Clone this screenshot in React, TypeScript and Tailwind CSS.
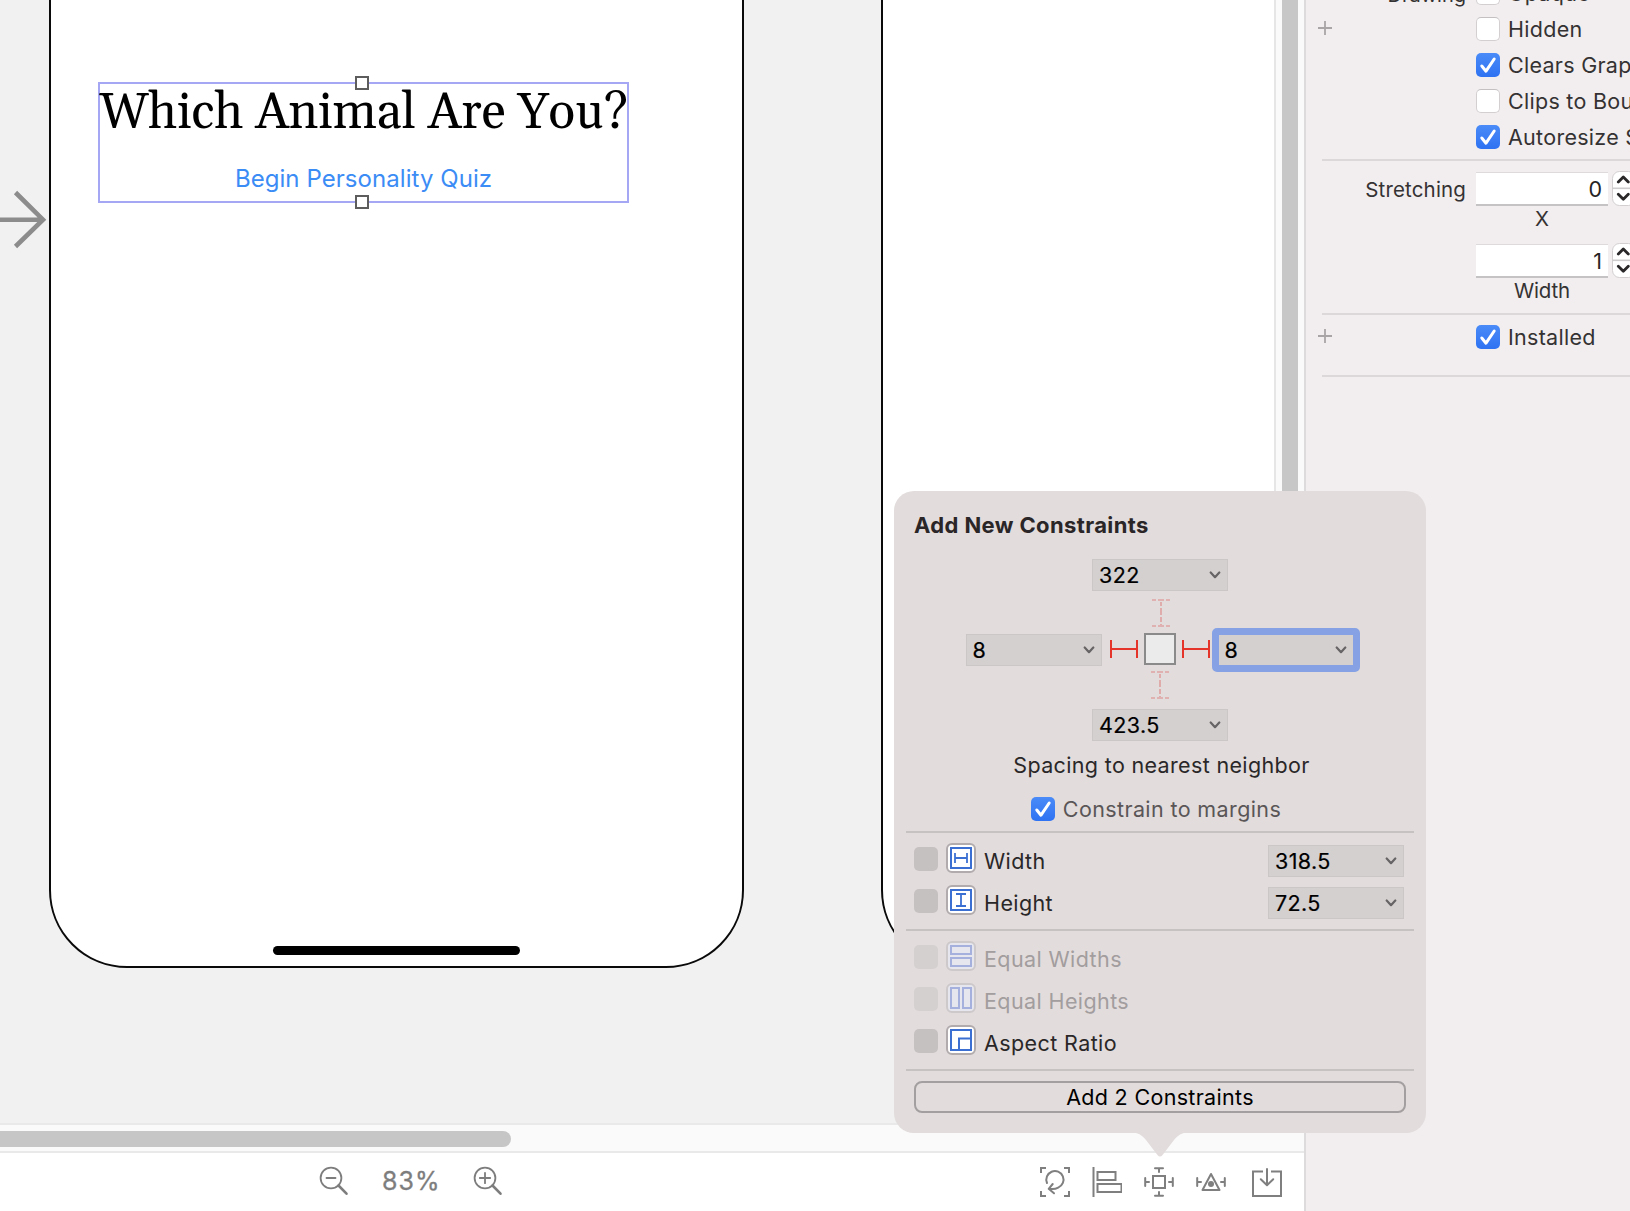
import type { ReactNode } from "react";

function Check() {
  return (
    <svg viewBox="0 0 24 24" className="size-6" fill="none">
      <path d="M5.8 13L10 18.2L18.2 6" stroke="white" strokeWidth="3" strokeLinecap="round" strokeLinejoin="round" />
    </svg>
  );
}

function CheckBox({ checked }: { checked?: boolean }) {
  return checked ? (
    <span className="size-6 shrink-0 rounded-[5px] bg-gradient-to-b from-[#4a8bf8] to-[#2f72f2]">
      <Check />
    </span>
  ) : (
    <span className="size-6 shrink-0 rounded-[5px] border border-[#d3cfd0] border-t-[#c4c0c1] bg-white" />
  );
}

function Attribute({ label, checked }: { label: string; checked?: boolean }) {
  return (
    <div className="flex h-9 items-center whitespace-nowrap pl-[170px]">
      <CheckBox checked={checked} />
      <span className="ml-2 text-[21.5px] tracking-[0.28px]">{label}</span>
    </div>
  );
}

function Plus() {
  return (
    <svg viewBox="0 0 14 14" className="size-[14px]" stroke="#a9a5a6" strokeWidth="1.8">
      <path d="M7 0V14M0 7H14" />
    </svg>
  );
}

function StepperField({ value }: { value: string }) {
  return (
    <div className="flex">
      <div className="flex h-[34px] w-[132px] shrink-0 items-center justify-end border-b-2 border-t border-b-[#c6c3c4] border-t-[#dedadb] bg-white pr-[6px] pt-px text-[21.5px] text-[#262424]">
        {value}
      </div>
      <svg viewBox="0 0 24 36" className="-mt-px ml-1 h-9 w-6 shrink-0" fill="none">
        <rect x="0.5" y="0.5" width="23" height="34" rx="7" fill="#fff" stroke="#d3cfd0" />
        <path d="M0 17.3H24" stroke="#cfcccd" strokeWidth="1.6" />
        <path d="M6.3 11L11.3 6L16.3 11M6.3 23.2L11.3 28.2L16.3 23.2" stroke="#2a2829" strokeWidth="2.8" strokeLinecap="round" strokeLinejoin="round" />
      </svg>
    </div>
  );
}

function Inspector() {
  return (
    <aside className="relative h-full w-[324px] overflow-hidden bg-[#f2eeef] text-[#353233]">
      <div className="-mt-[25px]">
        <div className="relative">
          <span className="absolute right-[164px] top-[5px] text-[20px]">Drawing</span>
          <Attribute label="Opaque" />
        </div>
        <div className="relative">
          <span className="absolute left-3 top-[10px]"><Plus /></span>
          <Attribute label="Hidden" />
        </div>
        <Attribute label="Clears Graphics Context" checked />
        <Attribute label="Clips to Bounds" />
        <Attribute label="Autoresize Subviews" checked />
      </div>
      <div className="ml-4 mt-1 h-0.5 bg-[#dcd8d9]" />
      <div className="mt-[11px] flex">
        <div className="w-[170px] shrink-0 pr-[10px] pt-[2px] text-right text-[20.5px] leading-[31px] tracking-[0.15px]">Stretching</div>
        <div className="shrink-0">
          <StepperField value="0" />
          <div className="-mt-px h-[38px] w-[132px] text-center text-[20.5px] leading-[26px]">X</div>
          <StepperField value="1" />
          <div className="-mt-px h-[38px] w-[132px] text-center text-[20.5px] leading-[26px] tracking-[-0.2px]">Width</div>
        </div>
      </div>
      <div className="ml-4 -mt-[3px] h-0.5 bg-[#dcd8d9]" />
      <div className="relative mt-1">
        <span className="absolute left-3 top-[10px]"><Plus /></span>
        <Attribute label="Installed" checked />
      </div>
      <div className="ml-4 mt-5 h-0.5 bg-[#dcd8d9]" />
    </aside>
  );
}

function Combo({ value, focused }: { value: string; focused?: boolean }) {
  return (
    <div
      className={
        "flex items-center justify-between bg-[#d5d0d0] text-[21.5px] tracking-[0.4px] text-black [-webkit-text-stroke:0.2px_black] " +
        (focused
          ? "h-11 w-[148px] rounded-[5px] border-[7px] border-[#86a2e4] pl-[6px] pr-[6px]"
          : "h-8 w-[136px] border border-[#ccc7c7] pl-[6px] pr-[6px]")
      }
    >
      <span>{value}</span>
      <svg viewBox="0 0 12 8" className="h-2 w-3" fill="none" stroke="#676465" strokeWidth="2.2" strokeLinecap="round" strokeLinejoin="round">
        <path d="M1.7 1.5L6 6.2L10.3 1.5" />
      </svg>
    </div>
  );
}

function Strut() {
  return (
    <svg viewBox="0 0 28 18" className="h-[18px] w-7" stroke="#e5352b" strokeWidth="2" fill="none">
      <path d="M1 0V18M27 0V18M1 9H27" />
    </svg>
  );
}

function DashedStrut() {
  return (
    <svg viewBox="0 0 18 28" className="h-7 w-[18px]" stroke="#dfa3a3" strokeWidth="1.7" fill="none">
      <path d="M0 1H18M0 27H18" strokeDasharray="4 2 6 2 4" />
      <path d="M9 3V26" strokeDasharray="4 2 7 2 5 2" />
    </svg>
  );
}

function Option({ label, icon, dim, value }: { label: string; icon: ReactNode; dim?: boolean; value?: string }) {
  return (
    <div className="flex h-[42px] items-center pl-5 pr-[22px]">
      <span className={"mb-1 size-6 rounded-[5px] " + (dim ? "bg-[#d5d0d0]" : "bg-[#c6c1c1]")} />
      <span
        className={
          "mb-[6px] ml-2 flex size-[30px] items-center justify-center rounded-[6px] border-2 " +
          (dim ? "border-[#cdc8ca] bg-[#e6e6ef]" : "border-[#b1abad] bg-white")
        }
      >
        <svg viewBox="0 0 22 22" className="size-[22px]" fill="none" stroke={dim ? "#a6b0dc" : "#3b70d2"} strokeWidth="2">
          {icon}
        </svg>
      </span>
      <span className={"ml-2 flex-1 text-[21.5px] tracking-[0.4px] " + (dim ? "text-[#a29d9e]" : "text-[#2a2728]")}>{label}</span>
      {value && <Combo value={value} />}
    </div>
  );
}

function Rule() {
  return <div className="mx-3 h-0.5 shrink-0 bg-[#c7c2c2]" />;
}

function Popover() {
  return (
    <section className="absolute left-[894px] top-[491px] flex h-[642px] w-[532px] flex-col rounded-[20px] bg-[#e2dcdc]">
      <h2 className="flex h-[68px] items-center pl-5 text-[22px] font-bold tracking-[0.38px] text-[#2a2527]">Add New Constraints</h2>
      <div className="flex flex-col items-center">
        <Combo value="322" />
        <div className="ml-[2px] mt-2"><DashedStrut /></div>
        <div className="ml-[5px] mt-[1px] flex h-11 items-center">
          <Combo value="8" />
          <span className="-mt-0.5 ml-2"><Strut /></span>
          <span className="-mt-0.5 mx-[6px] size-8 border-2 border-[#8b8a8b] bg-[#ebebeb]" />
          <span className="-mt-0.5"><Strut /></span>
          <span className="ml-0.5"><Combo value="8" focused /></span>
        </div>
        <div className="mt-[-1px]"><DashedStrut /></div>
        <div className="mt-[10px]"><Combo value="423.5" /></div>
        <div className="flex h-12 items-center pl-[3px] text-[21.5px] tracking-[0.34px] text-[#2a2728]">Spacing to nearest neighbor</div>
        <div className="flex h-10 items-center pr-2">
          <CheckBox checked />
          <span className="ml-2 text-[21.5px] tracking-[0.38px] text-[#5a5657]">Constrain to margins</span>
        </div>
      </div>
      <div className="mb-[7px] mt-0.5"><Rule /></div>
      <Option label="Width" value="318.5" icon={<><rect x="1" y="1" width="20" height="20" /><path d="M5 6V16M17 6V16M5 11H17" strokeWidth="1.8" /></>} />
      <Option label="Height" value="72.5" icon={<><rect x="1" y="1" width="20" height="20" /><path d="M6 5H16M6 17H16M11 5V17" strokeWidth="1.8" /></>} />
      <div className="mb-[7px] mt-[5px]"><Rule /></div>
      <Option label="Equal Widths" dim icon={<><rect x="1" y="1" width="20" height="8" /><rect x="1" y="13" width="20" height="8" /></>} />
      <Option label="Equal Heights" dim icon={<><rect x="1" y="1" width="8" height="20" /><rect x="13" y="1" width="8" height="20" /></>} />
      <Option label="Aspect Ratio" icon={<><rect x="1" y="1" width="20" height="20" /><path d="M9 21V9.5H21" /></>} />
      <div className="mb-[10px] mt-[5px]"><Rule /></div>
      <button className="mx-5 flex h-8 items-center justify-center rounded-[8px] border-2 border-[#a39e9f] text-[21.5px] tracking-[0.32px] text-black">
        Add 2 Constraints
      </button>
      <svg viewBox="0 0 60 26" className="absolute left-[236px] top-full -mt-px h-[26px] w-[60px]" fill="#e2dcdc">
        <path d="M0 0C8 0.5 12 3 16 8L27.5 23Q30 26 32.5 23L44 8C48 3 52 0.5 60 0Z" />
      </svg>
    </section>
  );
}

function Magnifier({ plus }: { plus?: boolean }) {
  return (
    <svg viewBox="0 0 30 30" className="size-[30px]" fill="none" stroke="#7d7d7d">
      <circle cx="12" cy="12" r="10.4" strokeWidth="1.8" />
      <path d="M19.5 19.5L27.5 27.7" strokeWidth="2.6" strokeLinecap="round" />
      <path d={plus ? "M6.8 12H17.2M12 6.8V17.2" : "M7.5 12H16.5"} strokeWidth="1.8" strokeLinecap="round" />
    </svg>
  );
}

function ToolIcon({ children }: { children: ReactNode }) {
  return (
    <svg viewBox="0 0 30 30" className="size-[30px]" fill="none" stroke="#7f7f7f" strokeWidth="2">
      {children}
    </svg>
  );
}

function Toolbar() {
  return (
    <footer className="flex h-[58px] items-center bg-white pl-[319px]">
      <span className="-mt-0.5"><Magnifier /></span>
      <span className="ml-[33px] w-[63px] pb-px text-[25px] tracking-[1px] text-[#7d7d7d] [-webkit-text-stroke:0.3px_#7d7d7d]">83%</span>
      <span className="-mt-0.5 ml-[28px]"><Magnifier plus /></span>
      <div className="ml-auto mr-[22px] flex items-center">
        <ToolIcon>
          <path d="M1 6V1H6M24 1H29V6M29 24V29H24M6 29H1V24" />
          <path d="M7 16A8.6 8.6 0 1 1 18.2 20.6Q14.5 22.6 9.5 21.8" strokeLinecap="round" />
          <path d="M12.7 17L8.7 21.8L14 26.3" strokeLinecap="round" strokeLinejoin="round" />
        </ToolIcon>
        <span className="ml-[22px]">
          <ToolIcon>
            <path d="M1.5 0V30" />
            <rect x="5.5" y="5" width="18" height="8" />
            <rect x="5.5" y="17" width="24" height="8" />
          </ToolIcon>
        </span>
        <span className="ml-[22px]">
          <ToolIcon>
            <rect x="9" y="9" width="12" height="12" />
            <path d="M11 1.2H19M15 1.2V5M11 28.8H19M15 28.8V25M1.2 11V19M1.2 15H5M28.8 11V19M28.8 15H25" strokeLinecap="round" />
          </ToolIcon>
        </span>
        <span className="ml-[22px]">
          <ToolIcon>
            <path d="M15 7L23.5 23H6.5Z" strokeLinejoin="round" />
            <circle cx="15" cy="17" r="3" fill="#7f7f7f" stroke="none" />
            <path d="M1.2 11V19M1.2 15H5M28.8 11V19M28.8 15H25" strokeLinecap="round" />
          </ToolIcon>
        </span>
        <span className="ml-[26px]">
          <ToolIcon>
            <path d="M11 4.5H1V29H29V4.5H19" />
            <path d="M15 2V18M8.8 12.3L15 18.3L21.2 12.3" strokeLinecap="round" strokeLinejoin="round" />
          </ToolIcon>
        </span>
      </div>
    </footer>
  );
}

function Handle({ className }: { className: string }) {
  return <span className={"absolute left-[255px] size-[14px] border-2 border-[#5d5d5d] bg-white " + className} />;
}

function Canvas() {
  return (
    <div className="relative h-full w-[1274px] overflow-hidden bg-[#f1f1f1]">
      <svg viewBox="0 0 48 60" className="absolute left-0 top-[190px] h-[60px] w-12" fill="none" stroke="#8c8c8c" strokeWidth="4.6">
        <path d="M0 29.7H43M15.5 2.5L43 29.7L15.5 56.5" />
      </svg>
      <div className="absolute left-[49px] top-[-120px] h-[1088px] w-[695px] rounded-[78px] border-2 border-[#0a0a0a] bg-white" />
      <div className="absolute left-[881px] top-[-120px] h-[1088px] w-[694px] rounded-[78px] border-2 border-[#0a0a0a] bg-white" />
      <div className="absolute left-[273px] top-[946px] h-[9px] w-[247px] rounded-full bg-black" />
      <div className="absolute left-[98px] top-[82px] flex h-[121px] w-[531px] flex-col items-center border-2 border-[#a5a7f5]">
        <Handle className="-top-[8px]" />
        <Handle className="-bottom-[8px]" />
        <h1 className="h-[82px] whitespace-nowrap font-[Gelasio,Georgia,'Liberation_Serif',serif] text-[50px] leading-[59px] tracking-[-0.1px] text-black">Which Animal Are You?</h1>
        <span className="-mt-[5px] text-[24px] leading-[36px] tracking-[0.06px] text-[#3c8cf6]">Begin Personality Quiz</span>
      </div>
    </div>
  );
}

export default function App() {
  return (
    <main className="relative flex h-[1211px] w-[1630px] overflow-hidden font-[Inter,sans-serif]">
      <div className="flex w-[1304px] flex-col">
        <div className="flex h-[1123px]">
          <Canvas />
          <div className="h-full w-[30px] border-l-2 border-[#e6e6e6] bg-[#fafafa] pl-[6px]">
            <div className="h-[700px] w-4 rounded-b-full bg-[#c7c7c7]" />
          </div>
        </div>
        <div className="h-[30px] border-y-2 border-[#e9e9e9] bg-[#fafafa] pt-[6px]">
          <div className="h-4 w-[511px] rounded-r-full bg-[#c6c6c6]" />
        </div>
        <Toolbar />
      </div>
      <div className="h-full w-0.5 bg-[#dddbdc]" />
      <Inspector />
      <Popover />
    </main>
  );
}
